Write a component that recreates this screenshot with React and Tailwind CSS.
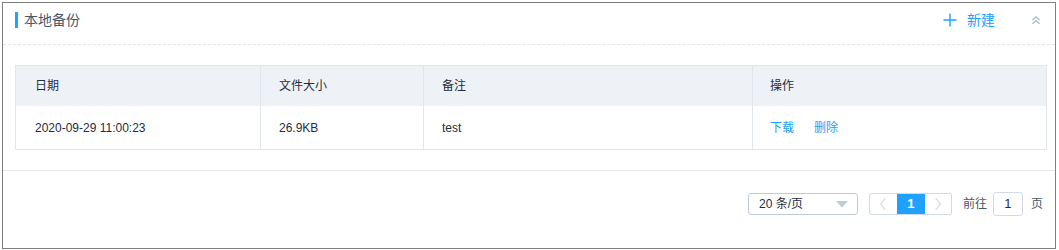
import React from "react";

const FONT = { fontFamily: '"Liberation Sans", "Noto Sans CJK SC", sans-serif' };

function Plus() {
  return (
    <svg width="14" height="14" viewBox="0 0 14 14" className="block">
      <path d="M7 0.5V13.5M0.5 7H13.5" stroke="#20a0ff" strokeWidth="1.4" fill="none" />
    </svg>
  );
}

function DoubleUp() {
  return (
    <svg width="10" height="10" viewBox="0 0 10 10" className="block">
      <path d="M1.5 5L5 1.8L8.5 5M1.5 8.8L5 5.6L8.5 8.8" stroke="#a9b7c8" strokeWidth="1.3" fill="none" />
    </svg>
  );
}

function Chevron({ dir }) {
  return (
    <svg width="8" height="14" viewBox="0 0 8 14" className="block">
      {dir === "left" ? (
        <path d="M6.5 1L1.5 7L6.5 13" stroke="#dcdfe6" strokeWidth="1.3" fill="none" />
      ) : (
        <path d="M1.5 1L6.5 7L1.5 13" stroke="#dcdfe6" strokeWidth="1.3" fill="none" />
      )}
    </svg>
  );
}

export default function App() {
  return (
    <div className="p-[2px] bg-white" style={FONT}>
      <div className="w-[1054px] h-[247px] border border-[#7f7f7f] bg-white flex flex-col">
        {/* header */}
        <div className="flex items-start justify-between pl-[12px] pr-[12px] pt-[9px] h-[42px] border-b border-dashed border-[#dfe6ec]">
          <div className="flex items-center gap-[6px] h-[16px]">
            <div className="w-[3px] h-[16px] bg-[#20a0ff]" />
            <span className="text-[14px] leading-[16px] text-[#48576a]">本地备份</span>
          </div>
          <div className="flex items-center h-[16px]">
            <div className="flex items-center gap-[10px] text-[#20a0ff] text-[14px] leading-[16px]">
              <Plus />
              <span>新建</span>
            </div>
            <div className="ml-[36px] mr-[2px]">
              <DoubleUp />
            </div>
          </div>
        </div>

        {/* table */}
        <div className="pt-[20px] pb-[20px] pl-[12px]">
          <div className="w-[1032px] border border-[#dfe6ec] text-[12px] text-[#1f2d3d]">
            <div className="grid grid-cols-[245px_163px_329px_1fr] h-[40px] bg-[#eef1f6]">
              <div className="flex items-center pl-[19px] border-r border-[#dfe6ec]">日期</div>
              <div className="flex items-center pl-[18px] border-r border-[#dfe6ec]">文件大小</div>
              <div className="flex items-center pl-[18px] border-r border-[#dfe6ec]">备注</div>
              <div className="flex items-center pl-[17px]">操作</div>
            </div>
            <div className="grid grid-cols-[245px_163px_329px_1fr] h-[43px] bg-white">
              <div className="flex items-center pl-[19px] border-r border-[#dfe6ec]">2020-09-29 11:00:23</div>
              <div className="flex items-center pl-[18px] border-r border-[#dfe6ec]">26.9KB</div>
              <div className="flex items-center pl-[18px] border-r border-[#dfe6ec]">test</div>
              <div className="flex items-center pl-[17px] gap-[20px] text-[#20a0ff]">
                <span>下载</span>
                <span>删除</span>
              </div>
            </div>
          </div>
        </div>

        {/* footer */}
        <div className="border-t border-[#e6e6e6] pt-[21px] flex justify-end pr-[12px]">
          <div className="flex items-center text-[12px] text-[#48576a]">
            <div className="w-[110px] h-[22px] border border-[#bfcbd9] rounded-[3px] flex items-center justify-between pl-[10px] pr-[9px] text-[#1f2d3d]">
              <span>20 条/页</span>
              <svg width="12" height="7" viewBox="0 0 12 7" className="block">
                <path d="M0 0H12L6 6.5Z" fill="#bfcbd9" />
              </svg>
            </div>
            <div className="ml-[11px] flex h-[22px] border border-[#d1dbe5] rounded-[2px]">
              <div className="w-[27px] flex items-center justify-center">
                <Chevron dir="left" />
              </div>
              <div className="w-[28px] flex items-center justify-center bg-[#20a0ff] text-white font-bold text-[13px]">1</div>
              <div className="w-[26px] flex items-center justify-center">
                <Chevron dir="right" />
              </div>
            </div>
            <span className="ml-[11px]">前往</span>
            <div className="ml-[6px] w-[30px] h-[24px] border border-[#d1dbe5] rounded-[3px] flex items-center justify-center text-[#1f2d3d] text-[13px]">1</div>
            <span className="ml-[8px]">页</span>
          </div>
        </div>
      </div>
    </div>
  );
}
